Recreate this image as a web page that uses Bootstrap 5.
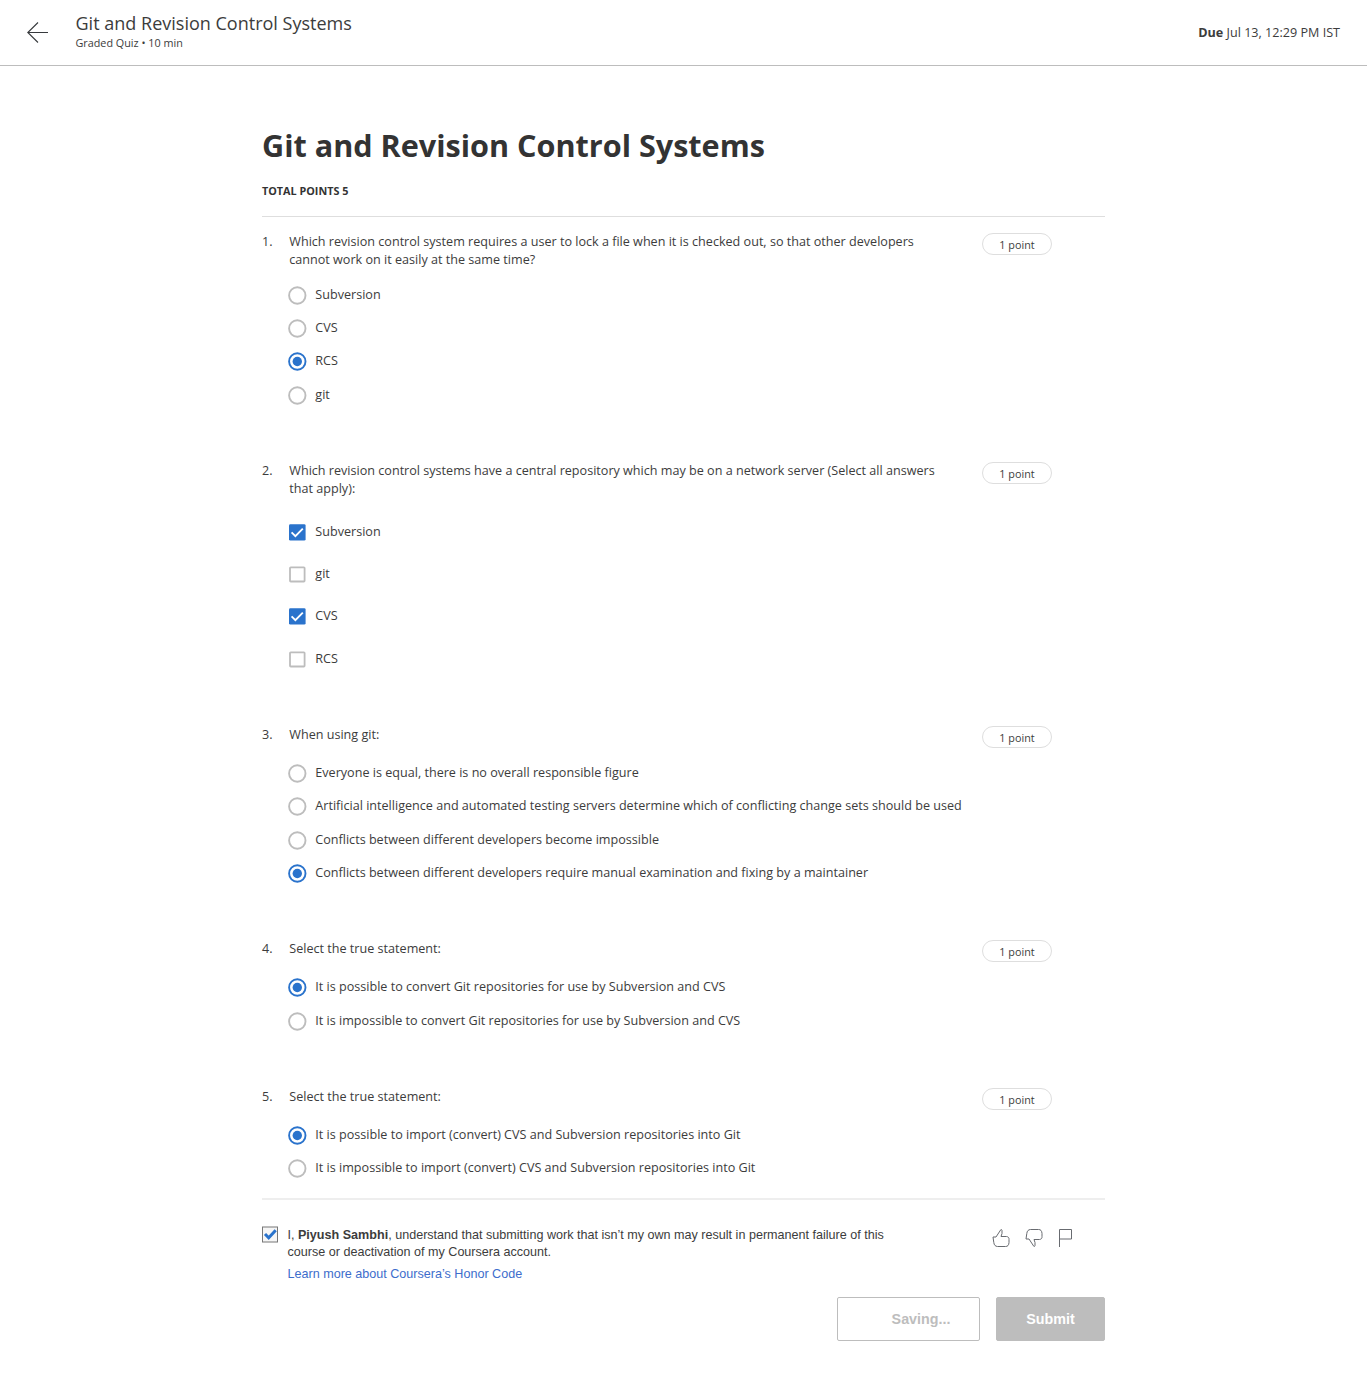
<!DOCTYPE html>
<html lang="en">
<head>
<meta charset="utf-8">
<meta name="viewport" content="width=device-width, initial-scale=1">
<title>Git and Revision Control Systems</title>
<link href="https://cdn.jsdelivr.net/npm/bootstrap@5.3.0/dist/css/bootstrap.min.css" rel="stylesheet">
<style>
body{font-family:"Open Sans",sans-serif;font-size:12.6px;line-height:18px;color:#3c3c3c;background:#fff}
svg{display:block;flex:none}
.topbar{height:66px;border-bottom:1px solid #bdbdbd;padding:0 27px}
.topbar .titles{margin-left:26.5px;margin-top:-1px}
.topbar h2{font-size:18.02px;line-height:21px;font-weight:400;margin:0}
.topbar .sub{font-size:10.8px;line-height:17px}
.quiz{width:843px;margin-left:262px;padding-top:58px}
.quiz h1{font-size:30.58px;line-height:43px;font-weight:700;color:#333;margin:0}
.total{font-size:10.8px;line-height:16px;font-weight:700;color:#333;margin-top:16px;padding-bottom:17px;border-bottom:1px solid #dedede}
.questions{padding-top:15.6px;border-bottom:2px solid #eee}
.question{padding-bottom:50.5px}
.question:last-child{padding-bottom:13.5px}
.qhead{min-height:21.1px}
.qnum{width:27.3px}
.qtext{width:660px}
.pill{width:70px;height:22px;margin-left:32.7px;border:1px solid #dedede;border-radius:11px;font-size:10.8px;line-height:21.5px;text-align:center;flex:none}
.pillbox{height:17px}
.opts{padding:9.4px 0 0 26px}
.opt{height:33.3px}
.opt svg{margin:1px 8.3px 0 0}
.multi .opts{padding-top:13px}
.multi .opt{height:42.3px}
.multi{padding-bottom:46.2px}
.foot{font-family:"Liberation Sans",sans-serif;font-size:12.58px;padding-top:26px}
.honor{width:625px;line-height:17px;padding-top:.5px}
.honor a{color:#3d6dcc;text-decoration:none;display:block;margin-top:5px}
.foot .check{margin:0 9.5px 0 0}
.feedback{margin-right:32px;margin-top:2px;gap:15px}
.actions{margin-top:14px}
.act{height:44px;border-radius:2px;font-size:14.3px;font-weight:700;padding:0;border:1px solid #bdbdbd;line-height:42px}
.saving{width:143px;color:#bdbdbd;padding-left:25px;background:#fff}
.submit{width:109px;background:#bdbdbd;color:#fff}
</style>
<script src="https://cdn.jsdelivr.net/npm/bootstrap@5.3.0/dist/js/bootstrap.bundle.min.js"></script>
</head>
<body>
<svg width="0" height="0" class="position-absolute">
<symbol id="r0" viewBox="0 0 19 19"><circle cx="9.3" cy="9.5" r="8.2" fill="#fff" stroke="#bdbdbd" stroke-width="1.9"/></symbol>
<symbol id="r1" viewBox="0 0 19 19"><circle cx="9.3" cy="9.5" r="8.2" fill="#fff" stroke="#2a73cc" stroke-width="1.9"/><circle cx="9.3" cy="9.5" r="4.7" fill="#2a73cc"/></symbol>
<symbol id="c0" viewBox="0 0 19 19"><rect x="2" y="2.3" width="14.6" height="14.2" rx=".8" fill="#fff" stroke="#bdbdbd" stroke-width="1.8"/></symbol>
<symbol id="c1" viewBox="0 0 19 19"><rect x="1" y="1.2" width="16.6" height="16.4" rx="1.4" fill="#2a73cc"/><path d="M3.6 9.4l3.8 3.7 7.4-7.4" fill="none" stroke="#fff" stroke-width="1.9"/></symbol>
</svg>

<header class="topbar d-flex align-items-center">
  <svg width="22" height="22" viewBox="0 0 22 22" fill="none" stroke="#373a3d" stroke-width="1.1"><path d="M21 10.5H.8M11 .5l-10.2 10 10.2 10"/></svg>
  <div class="titles"><h2>Git and Revision Control Systems</h2><div class="sub">Graded Quiz • 10 min</div></div>
  <div class="ms-auto"><b>Due</b> Jul 13, 12:29 PM IST</div>
</header>

<main class="quiz">
  <h1>Git and Revision Control Systems</h1>
  <div class="total">TOTAL POINTS 5</div>
  <div class="questions">
    <section class="question">
      <div class="qhead d-flex"><div class="qnum">1.</div><div class="qtext">Which revision control system requires a user to lock a file when it is checked out, so that other developers<br>cannot work on it easily at the same time?</div><div class="pill">1 point</div></div>
      <div class="opts">
        <div class="opt d-flex align-items-center"><svg width="19" height="19"><use href="#r0"/></svg>Subversion</div>
        <div class="opt d-flex align-items-center"><svg width="19" height="19"><use href="#r0"/></svg>CVS</div>
        <div class="opt d-flex align-items-center"><svg width="19" height="19"><use href="#r1"/></svg>RCS</div>
        <div class="opt d-flex align-items-center"><svg width="19" height="19"><use href="#r0"/></svg>git</div>
      </div>
    </section>
    <section class="question multi">
      <div class="qhead d-flex"><div class="qnum">2.</div><div class="qtext">Which revision control systems have a central repository which may be on a network server (Select all answers<br>that apply):</div><div class="pill">1 point</div></div>
      <div class="opts">
        <div class="opt d-flex align-items-center"><svg width="19" height="19"><use href="#c1"/></svg>Subversion</div>
        <div class="opt d-flex align-items-center"><svg width="19" height="19"><use href="#c0"/></svg>git</div>
        <div class="opt d-flex align-items-center"><svg width="19" height="19"><use href="#c1"/></svg>CVS</div>
        <div class="opt d-flex align-items-center"><svg width="19" height="19"><use href="#c0"/></svg>RCS</div>
      </div>
    </section>
    <section class="question">
      <div class="qhead d-flex"><div class="qnum">3.</div><div class="qtext">When using git:</div><div class="pillbox"><div class="pill">1 point</div></div></div>
      <div class="opts">
        <div class="opt d-flex align-items-center"><svg width="19" height="19"><use href="#r0"/></svg>Everyone is equal, there is no overall responsible figure</div>
        <div class="opt d-flex align-items-center"><svg width="19" height="19"><use href="#r0"/></svg>Artificial intelligence and automated testing servers determine which of conflicting change sets should be used</div>
        <div class="opt d-flex align-items-center"><svg width="19" height="19"><use href="#r0"/></svg>Conflicts between different developers become impossible</div>
        <div class="opt d-flex align-items-center"><svg width="19" height="19"><use href="#r1"/></svg>Conflicts between different developers require manual examination and fixing by a maintainer</div>
      </div>
    </section>
    <section class="question">
      <div class="qhead d-flex"><div class="qnum">4.</div><div class="qtext">Select the true statement:</div><div class="pillbox"><div class="pill">1 point</div></div></div>
      <div class="opts">
        <div class="opt d-flex align-items-center"><svg width="19" height="19"><use href="#r1"/></svg>It is possible to convert Git repositories for use by Subversion and CVS</div>
        <div class="opt d-flex align-items-center"><svg width="19" height="19"><use href="#r0"/></svg>It is impossible to convert Git repositories for use by Subversion and CVS</div>
      </div>
    </section>
    <section class="question">
      <div class="qhead d-flex"><div class="qnum">5.</div><div class="qtext">Select the true statement:</div><div class="pillbox"><div class="pill">1 point</div></div></div>
      <div class="opts">
        <div class="opt d-flex align-items-center"><svg width="19" height="19"><use href="#r1"/></svg>It is possible to import (convert) CVS and Subversion repositories into Git</div>
        <div class="opt d-flex align-items-center"><svg width="19" height="19"><use href="#r0"/></svg>It is impossible to import (convert) CVS and Subversion repositories into Git</div>
      </div>
    </section>
  </div>
  <div class="foot">
    <div class="d-flex align-items-start">
      <svg class="check" width="16" height="17" viewBox="0 0 16 17"><rect x=".5" y="1" width="15" height="15" fill="#f6f6f6" stroke="#777"/><path d="M3 8l3.7 3.8 7-7.5" fill="none" stroke="#2a73cc" stroke-width="3"/></svg>
      <div class="honor">I, <b>Piyush Sambhi</b>, understand that submitting work that isn’t my own may result in permanent failure of this<br>course or deactivation of my Coursera account.<a href="#">Learn more about Coursera’s Honor Code</a></div>
      <div class="feedback d-flex ms-auto">
        <svg width="18" height="20" viewBox="0 0 18 20" fill="none" stroke="#686b70" stroke-width="1"><path d="M1 9H4L8.6 2C8.8 1.2 10.2 1.5 10 2.6V5.5L9 8.5H14.5C16.3 8.7 17.2 9.8 17 11.5V14.5C16.8 17.3 15.7 18.5 13.5 18.5H5.5C3.2 18.3 2.1 17 1.8 14.5Z"/></svg>
        <svg width="18" height="20" viewBox="0 0 18 20" fill="none" stroke="#686b70" stroke-width="1"><path d="M1 11H4L8.6 18C8.8 18.8 10.2 18.5 10 17.4V14.5L9 11.5H14.5C16.3 11.3 17.2 10.2 17 8.5V5.5C16.8 2.7 15.7 1.5 13.5 1.5H5.5C3.2 1.7 2.1 3 1.8 5.5Z"/></svg>
        <svg width="15" height="20" viewBox="0 0 15 20" fill="none" stroke="#686b70" stroke-width="1"><path d="M1.5 19V1.5H13.5V11H1.5"/></svg>
      </div>
    </div>
    <div class="actions d-flex justify-content-end gap-3">
      <button class="btn act saving" type="button">Saving...</button>
      <button class="btn act submit" type="button">Submit</button>
    </div>
  </div>
</main>
</body>
</html>
